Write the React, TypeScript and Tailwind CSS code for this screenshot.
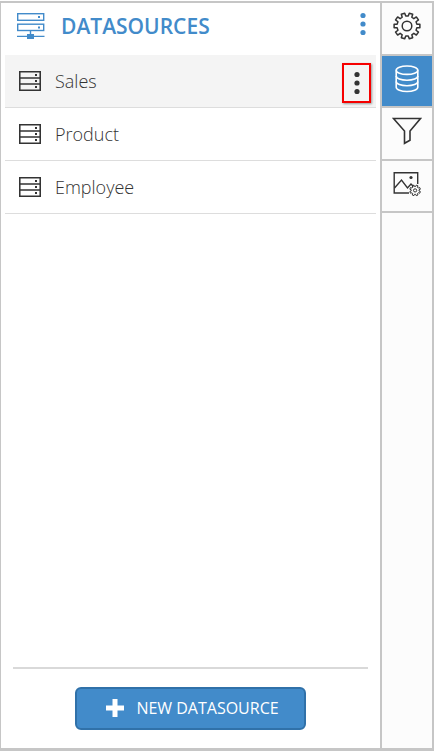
import React from "react";

function DatasourcesIcon() {
  return (
    <svg width="28" height="27" viewBox="0 0 28 27" fill="none" stroke="#428bca" strokeWidth="1.4" aria-hidden="true">
      <rect x="0.7" y="0.7" width="26" height="6.6" />
      <rect x="0.7" y="11.2" width="26" height="6.3" />
      <path d="M21 4h2M21 14.4h2" strokeWidth="2" />
      <path d="M13.5 17.5V23M0 23.4h27.5" />
      <rect x="10" y="21" width="7" height="5" fill="#428bca" stroke="none" />
    </svg>
  );
}

function TableIcon() {
  return (
    <svg width="22" height="20" viewBox="0 0 22 20" fill="none" stroke="#333333" strokeWidth="1.6" aria-hidden="true">
      <path d="M0.75 0.75h20.5v18.5H0.75zM0.75 7h20.5M0.75 13h20.5" />
      <path d="M16 4h2M16 10h2M16 16h2" strokeWidth="1.8" />
    </svg>
  );
}

function DotsIcon({ color }: { color: string }) {
  return (
    <svg width="6" height="24" viewBox="0 0 6 24" fill={color} aria-hidden="true">
      <circle cx="3" cy="3.5" r="2.6" />
      <circle cx="3" cy="12" r="2.6" />
      <circle cx="3" cy="20.5" r="2.6" />
    </svg>
  );
}

function gearPath(c: number, outer: number, inner: number, teeth: number) {
  const points: string[] = [];
  const step = (2 * Math.PI) / teeth;
  for (let i = 0; i < teeth; i++) {
    const a = (i + 0.5) * step;
    const corners = [
      [a - step * 0.3, inner],
      [a - step * 0.22, outer],
      [a + step * 0.22, outer],
      [a + step * 0.3, inner],
    ];
    for (const [t, r] of corners) {
      points.push(`${(c + r * Math.sin(t)).toFixed(2)} ${(c - r * Math.cos(t)).toFixed(2)}`);
    }
  }
  return `M${points.join("L")}Z`;
}

function GearIcon() {
  return (
    <svg width="28" height="28" viewBox="0 0 28 28" fill="none" stroke="#333333" strokeWidth="1.5" strokeLinejoin="round" aria-hidden="true">
      <path d={gearPath(14, 13, 10, 10)} />
      <circle cx="14" cy="14" r="4.8" />
    </svg>
  );
}

function DatabaseIcon() {
  return (
    <svg width="24" height="28" viewBox="0 0 24 28" fill="none" stroke="#ffffff" strokeWidth="1.6" aria-hidden="true">
      <ellipse cx="12" cy="5.2" rx="10.8" ry="4.2" />
      <path d="M1.2 5.2v17c0 2.4 4.8 4.3 10.8 4.3s10.8-1.9 10.8-4.3v-17" />
      <path d="M1.2 11c0 2.4 4.8 4.2 10.8 4.2S22.8 13.4 22.8 11M1.2 16.6c0 2.4 4.8 4.2 10.8 4.2s10.8-1.8 10.8-4.2" />
    </svg>
  );
}

function FilterIcon() {
  return (
    <svg width="30" height="28" viewBox="0 0 30 28" fill="none" stroke="#333333" strokeWidth="1.6" aria-hidden="true">
      <path d="M1.5 1.5h27L18 14v9.3l-5.5 3V14z" />
    </svg>
  );
}

function ImageSettingsIcon() {
  return (
    <svg width="28" height="26" viewBox="0 0 28 26" fill="none" stroke="#333333" strokeWidth="1.4" aria-hidden="true">
      <path d="M16 22H1.2V1.700h23.500V13" />
      <path d="M1.500 17l7-8 6 8 3.500-4 2.500 2.500" />
      <circle cx="18" cy="6.500" r="1.600" fill="#333333" stroke="none" />
      <g transform="translate(16.500 13.800)" strokeWidth="1">
        <path d={gearPath(5.6, 5.4, 4, 8)} />
        <circle cx="5.600" cy="5.600" r="1.600" />
      </g>
    </svg>
  );
}

const datasources = ["Sales", "Product", "Employee"];

const tabs = [
  { label: "Properties", icon: <GearIcon />, active: false },
  { label: "Data", icon: <DatabaseIcon />, active: true },
  { label: "Filters", icon: <FilterIcon />, active: false },
  { label: "Image settings", icon: <ImageSettingsIcon />, active: false },
];

export default function App() {
  return (
    <div className="flex min-h-screen bg-white pt-px font-['Open_Sans','Noto_Sans',sans-serif]">
      <div className="flex flex-1 border-t-2 border-r-2 border-b-3 border-l border-[#c6c6c6]">
        <main className="flex min-w-0 flex-1 flex-col">
          <header className="flex h-[52px] items-center pr-[14px] pb-1.5 pl-4">
            <DatasourcesIcon />
            <h1 className="ml-4 flex-1 text-[21px] leading-7 font-semibold text-[#428bca]">DATASOURCES</h1>
            <button type="button" aria-label="Datasource options" className="mt-[9px] flex self-start">
              <DotsIcon color="#428bca" />
            </button>
          </header>
          <ul className="mx-1">
            {datasources.map((name, i) => (
              <li
                key={name}
                className={`flex h-[53px] items-center border-b border-[#dddddd] pr-[5px] pl-[14px] ${i === 0 ? "bg-[#f4f4f4]" : ""}`}
              >
                <TableIcon />
                <span className="ml-3.5 flex-1 text-[18px] leading-6 font-light text-[#333333]">{name}</span>
                {i === 0 && (
                  <button
                    type="button"
                    aria-label={`${name} options`}
                    className="mt-2 flex h-10 w-[29px] items-center justify-center self-start border-2 border-[#f60000] shadow-[1px_1px_2px_#999999]"
                  >
                    <DotsIcon color="#333333" />
                  </button>
                )}
              </li>
            ))}
          </ul>
          <footer className="mx-3 mt-auto flex justify-center border-t-2 border-[#d9d9d9] py-[18px]">
            <button
              type="button"
              className="flex h-[43px] w-[231px] items-center justify-center gap-3 rounded-md border-2 border-[#3071a9] bg-[#428bca] pb-0.5 pl-1 text-[16px] leading-6 text-white"
            >
              <svg width="18" height="18" viewBox="0 0 18 18" fill="#ffffff" aria-hidden="true">
                <path d="M6.5 0h5v6.5H18v5h-6.5V18h-5v-6.5H0v-5h6.500z" />
              </svg>
              NEW DATASOURCE
            </button>
          </footer>
        </main>
        <nav aria-label="Panels" className="w-[52px] border-l-2 border-[#c6c6c6] bg-[#fcfcfc]">
          <div className="grid h-[210px] grid-rows-4">
            {tabs.map((tab) => (
              <button
                key={tab.label}
                type="button"
                aria-label={tab.label}
                aria-pressed={tab.active}
                className={`flex items-center justify-center border-b-2 border-[#c6c6c6] pb-1 ${tab.active ? "bg-[#428bca]" : ""}`}
              >
                {tab.icon}
              </button>
            ))}
          </div>
        </nav>
      </div>
    </div>
  );
}
